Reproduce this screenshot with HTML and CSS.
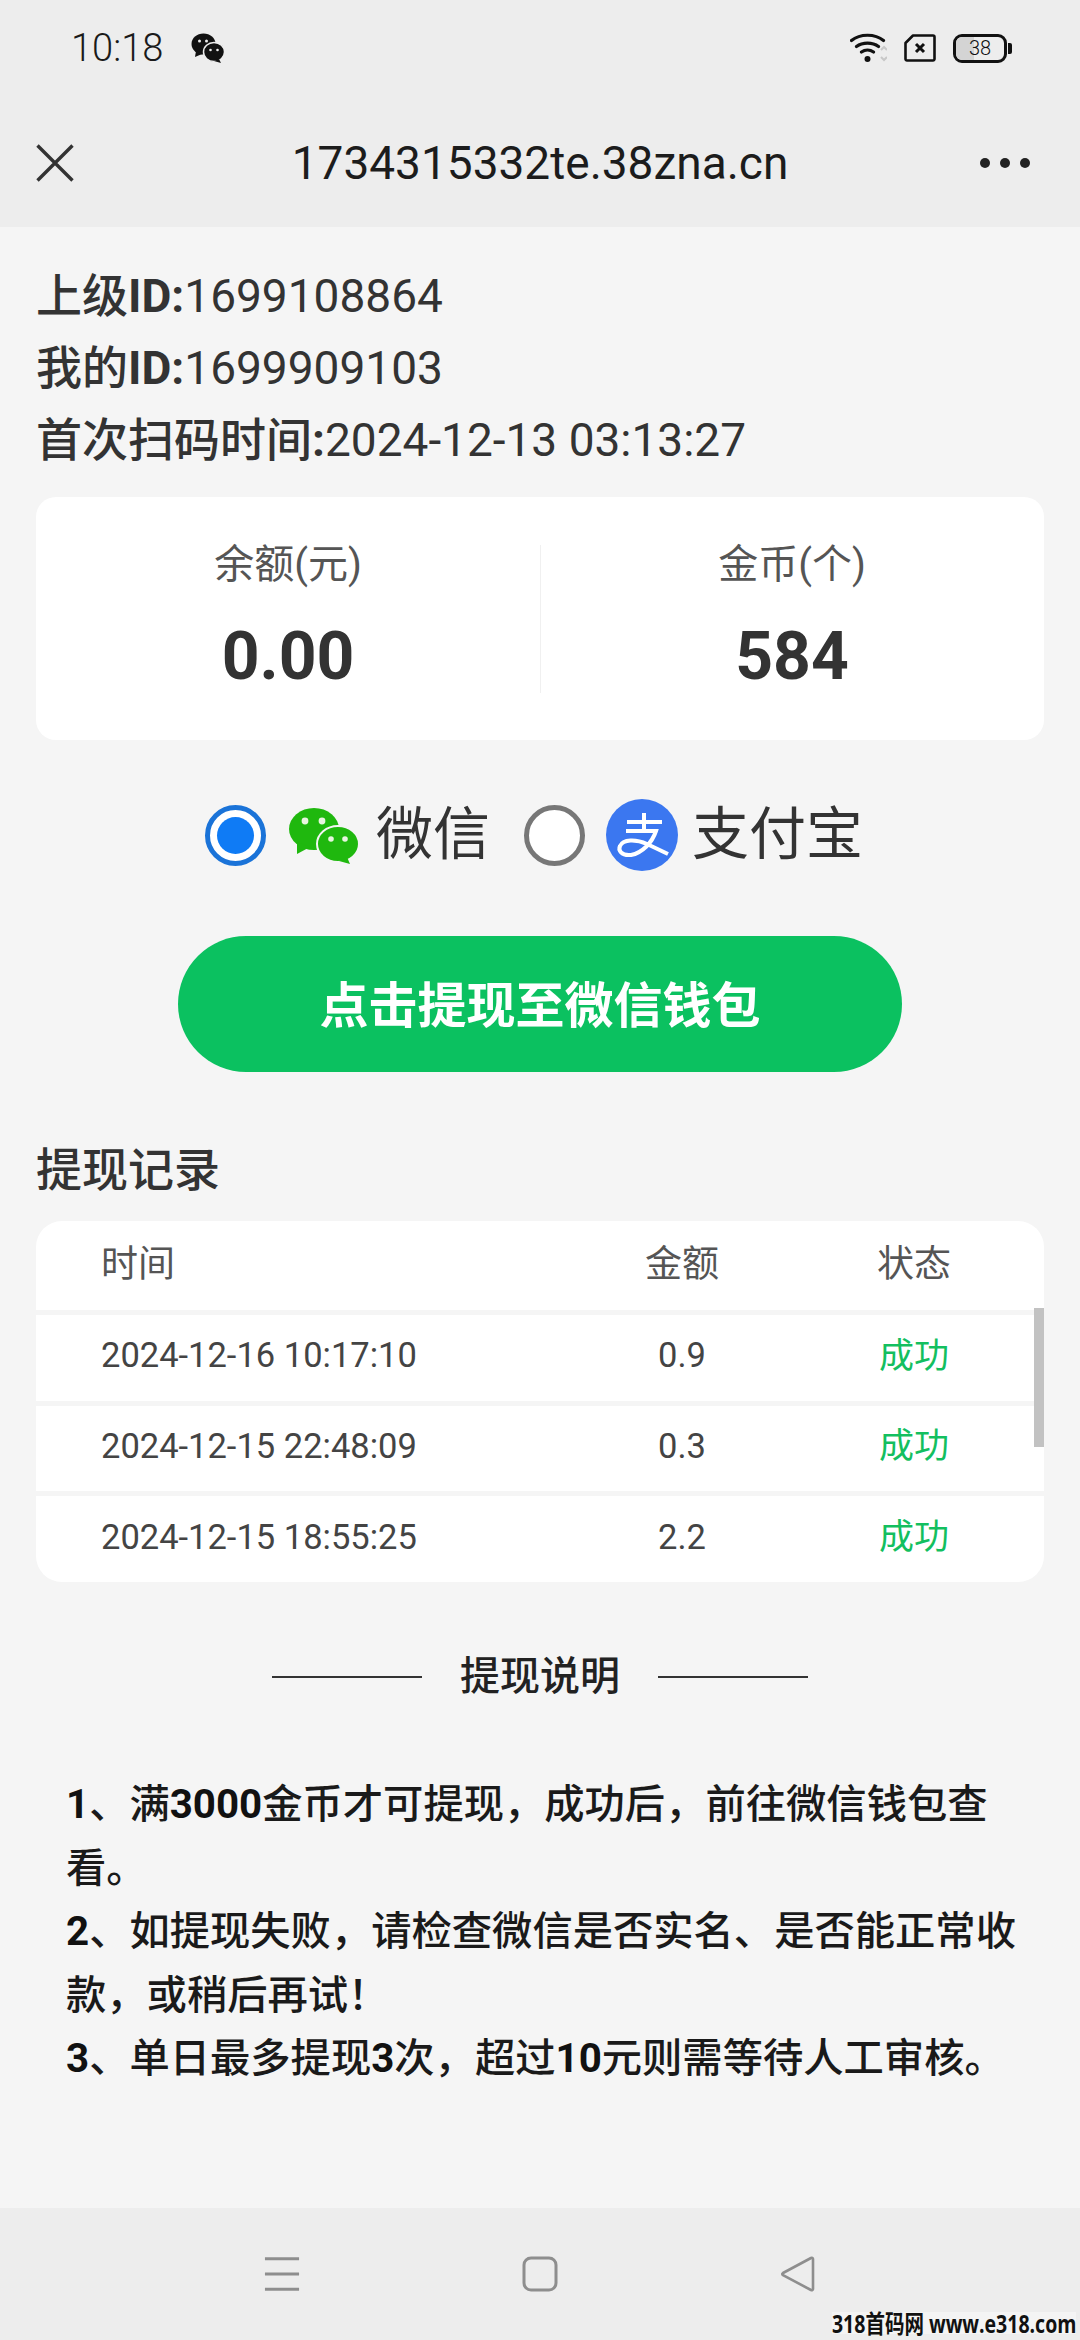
FILE: index.html
```html
<!DOCTYPE html>
<html lang="zh-CN">
<head>
<meta charset="utf-8">
<title>提现</title>
<link rel="stylesheet" href="styles.css">
</head>
<body>
<div class="phone">
  <header class="chrome">
    <div class="status">
      <div class="status-left">
        <span class="clock">10:18</span>
        <svg class="ic-wx" viewBox="0 0 34 30"><ellipse cx="12.500" cy="11" rx="12" ry="10.500" fill="#111"/><path d="M5 18l-1 6 7-3z" fill="#111"/><ellipse cx="23" cy="19" rx="10.500" ry="9.500" fill="#111" stroke="#ededed" stroke-width="1.500"/><path d="M28 26l2 4-7-2z" fill="#111"/><circle cx="8.500" cy="8" r="1.500" fill="#ededed"/><circle cx="15.500" cy="8" r="1.500" fill="#ededed"/><circle cx="19.500" cy="17" r="1.300" fill="#ededed"/><circle cx="26.500" cy="17" r="1.300" fill="#ededed"/></svg>
      </div>
      <div class="status-right">
        <svg class="ic-wifi" viewBox="0 0 37 30"><path d="M1.500 7.500C10 .5 25 .5 33.500 7.500M6.500 13.500c6-4.500 16-4.500 22 0M11.500 19c3.500-2.500 8.500-2.500 12 0" fill="none" stroke="#111" stroke-width="3.200" stroke-linecap="round"/><circle cx="17.500" cy="26" r="3" fill="#111"/><path d="M31 17l3-3 3 3M31 24l3 3 3-3" fill="none" stroke="#c8c8c8" stroke-width="2"/></svg>
        <svg class="ic-sim" viewBox="0 0 32 28"><path d="M9 1.500h20a1.500 1.500 0 0 1 1.500 1.500v22a1.500 1.500 0 0 1-1.500 1.500H3a1.500 1.500 0 0 1-1.500-1.500V9z" fill="none" stroke="#111" stroke-width="2.600" stroke-linejoin="round"/><path d="M12 10l8 8M20 10l-8 8" stroke="#111" stroke-width="3"/></svg>
        <div class="battery"><div class="battery-body"><span class="battery-fill"></span><span class="battery-num">38</span></div><span class="battery-tip"></span></div>
      </div>
    </div>
    <nav class="titlebar">
      <svg class="ic-close" viewBox="0 0 38 38"><path d="M1.500 1.500l35 35M36.500 1.500l-35 35" stroke="#333" stroke-width="3.400" fill="none"/></svg>
      <span class="site">1734315332te.38zna.cn</span>
      <div class="dots"><i></i><i></i><i></i></div>
    </nav>
  </header>

  <main class="content">
    <section class="info">
      <p><em>上级</em><b>ID:</b>1699108864</p>
      <p><em>我的</em><b>ID:</b>1699909103</p>
      <p><em>首次扫码时间</em><b>:</b>2024-12-13 03:13:27</p>
    </section>

    <section class="wallet">
      <div class="wallet-col"><span class="wallet-label">余额(元)</span><strong class="wallet-value">0.00</strong></div>
      <div class="wallet-col wallet-col-split"><span class="wallet-label">金币(个)</span><strong class="wallet-value">584</strong></div>
    </section>

    <section class="pay">
      <span class="radio radio-on"><i></i></span>
      <svg class="ic-wechat" viewBox="0 0 70 57"><ellipse cx="25" cy="22" rx="25" ry="21" fill="#1fb80e"/><path d="M8 35l0 12 13-7z" fill="#1fb80e"/><ellipse cx="49" cy="37" rx="21" ry="18" fill="#1fb80e" stroke="#f5f5f5" stroke-width="2"/><path d="M58 50l3 7-11-3z" fill="#1fb80e"/><circle cx="16" cy="14" r="3.400" fill="#e8f5e0"/><circle cx="33" cy="14" r="3.400" fill="#e8f5e0"/><circle cx="42" cy="32" r="2.800" fill="#e8f5e0"/><circle cx="56" cy="32" r="2.800" fill="#e8f5e0"/></svg>
      <span class="pay-name">微信</span>
      <span class="radio"></span>
      <svg class="ic-alipay" viewBox="0 0 72 72"><circle cx="36" cy="36" r="36" fill="#3b77f0"/><path d="M21 23h35M38 14v17M20 32h30c-4 12-14 22-25 24-10 1-13-5-11-9 3-7 16-7 27-2l21 10" fill="none" stroke="#fff" stroke-width="4"/></svg>
      <span class="pay-name">支付宝</span>
    </section>

    <button class="cta">点击提现至微信钱包</button>

    <h2 class="records-title">提现记录</h2>
    <section class="table">
      <div class="row row-head"><span>时间</span><span class="c">金额</span><span class="c">状态</span></div>
      <div class="row"><span>2024-12-16 10:17:10</span><span class="c">0.9</span><span class="c ok">成功</span></div>
      <div class="row"><span>2024-12-15 22:48:09</span><span class="c">0.3</span><span class="c ok">成功</span></div>
      <div class="row"><span>2024-12-15 18:55:25</span><span class="c">2.2</span><span class="c ok">成功</span></div>
      <span class="scrollbar"></span>
    </section>

    <h2 class="notes-title"><span>提现说明</span></h2>
    <ol class="notes">
      <li><b>1</b>、满<b>3000</b>金币才可提现，成功后，前往微信钱包查看。</li>
      <li><b>2</b>、如提现失败，请检查微信是否实名、是否能正常收款，或稍后再试！</li>
      <li><b>3</b>、单日最多提现<b>3</b>次，超过<b>10</b>元则需等待人工审核。</li>
    </ol>
  </main>

  <footer class="softkeys">
    <svg class="key" viewBox="0 0 38 36"><path d="M1 2h36M1 18h36M1 34h36" stroke="#8e8e8e" stroke-width="3.200"/></svg>
    <svg class="key" viewBox="0 0 36 36"><rect x="2" y="2" width="32" height="32" rx="7" fill="none" stroke="#8e8e8e" stroke-width="3"/></svg>
    <svg class="key" viewBox="0 0 36 36"><path d="M33 3c0-1-1-1.500-2-1L3 17c-1 .7-1 1.500 0 2.200L31 34c1 .5 2 0 2-1z" fill="none" stroke="#8e8e8e" stroke-width="2.600" stroke-linejoin="round"/></svg>
    <span class="watermark">318首码网 www.e318.com</span>
  </footer>
</div>
</body>
</html>
```
FILE: styles.css
```css
* { box-sizing: border-box; }
html, body { margin: 0; padding: 0; }
body { font-family: Roboto, "Noto Sans CJK SC", sans-serif; color: #333; background: #f5f5f5; }
.phone { width: 1080px; height: 2340px; display: flex; flex-direction: column; overflow: hidden; }

.chrome { background: #ededed; height: 227px; flex: none; }
.status { height: 90px; padding: 33px 68px 0 71px; display: flex; justify-content: space-between; align-items: flex-start; }
.status-left { display: flex; align-items: center; gap: 28px; height: 30px; }
.clock { font-size: 38px; font-weight: 300; color: #1a1a1a; line-height: 30px; }
.ic-wx { width: 34px; height: 30px; }
.status-right { display: flex; align-items: center; gap: 17px; height: 30px; }
.ic-wifi { width: 37px; height: 30px; }
.ic-sim { width: 32px; height: 28px; }
.battery { display: flex; align-items: center; gap: 1px; }
.battery-body { width: 54px; height: 29px; border: 3px solid #111; border-radius: 9px; position: relative; display: flex; align-items: center; justify-content: center; overflow: hidden; }
.battery-fill { position: absolute; left: 0; top: 0; bottom: 0; width: 38%; background: #d4d4d4; }
.battery-num { position: relative; font-size: 20px; font-weight: 300; color: #111; line-height: 1; }
.battery-tip { width: 4px; height: 11px; background: #111; border-radius: 0 2px 2px 0; }

.titlebar { height: 137px; padding: 8px 36px 0; display: grid; grid-template-columns: 1fr auto 1fr; align-items: center; }
.ic-close { width: 38px; height: 38px; }
.site { font-size: 46px; color: #1c1c1c; line-height: 1; }
.dots { display: flex; gap: 10px; justify-self: end; margin-right: 14px; }
.dots i { width: 10px; height: 10px; border-radius: 50%; background: #222; display: block; }

.content { flex: 1; padding: 33px 36px 0; min-height: 0; }
.info p { margin: 0; font-size: 46px; line-height: 72px; color: #333; }
.info em { font-style: normal; font-weight: 500; }
.info b { font-weight: 700; }

.wallet { margin-top: 21px; height: 243px; background: #fff; border-radius: 20px; display: grid; grid-template-columns: 1fr 1fr; align-items: center; }
.wallet-col { display: flex; flex-direction: column; align-items: center; }
.wallet-col-split { position: relative; }
.wallet-col-split::before { content: ""; position: absolute; left: 0; top: 5px; bottom: 5px; width: 1px; background: #f0f0f0; }
.wallet-label { font-size: 40px; line-height: 50px; color: #555; }
.wallet-value { font-size: 66px; font-weight: 700; line-height: 82px; margin-top: 26px; color: #333; }

.pay { margin-top: 59px; height: 72px; display: flex; align-items: center; padding-left: 169px; }
.radio { width: 61px; height: 61px; border-radius: 50%; border: 5px solid #777; background: #fff; display: flex; align-items: center; justify-content: center; flex: none; margin-right: 23px; }
.radio-on { border-color: #1a73d8; background: #fff; }
.radio-on i { width: 37px; height: 37px; border-radius: 50%; background: #0f7bf5; display: block; }
.ic-wechat { width: 70px; height: 57px; flex: none; margin-right: 17px; }
.ic-alipay { width: 72px; height: 72px; flex: none; margin-left: -2px; margin-right: 14px; }
.pay-name { font-size: 57px; line-height: 72px; color: #333; margin-right: 34px; }

.cta { display: block; margin: 65px auto 0; width: 724px; height: 136px; border: 0; border-radius: 68px; background: #0bc160; color: #fff; font-family: inherit; font-size: 49px; font-weight: 700; padding: 0 0 5px; }

.records-title { margin: 68px 0 0; font-size: 46px; font-weight: 500; line-height: 60px; color: #333; }
.table { margin-top: 21px; height: 361px; border-radius: 26px; overflow: hidden; position: relative; display: flex; flex-direction: column; gap: 5px; }
.row { flex: 1; background: #fff; display: grid; grid-template-columns: 1fr 232px 232px; align-items: center; padding: 0 14px 5px 65px; font-size: 34.500px; color: #444; }
.row-head { font-size: 37px; color: #555; padding-bottom: 8px; }
.c { text-align: center; }
.ok { color: #13bf5f; font-size: 35px; padding-bottom: 6px; }
.scrollbar { position: absolute; right: 0; top: 87px; width: 10px; height: 139px; background: #c2c2c2; }

.notes-title { margin: 67px 0 0; display: flex; align-items: center; justify-content: center; gap: 38px; font-size: 40px; font-weight: 500; line-height: 56px; color: #222; }
.notes-title::before, .notes-title::after { content: ""; width: 150px; height: 2px; background: #333; }
.notes { list-style: none; margin: 68px 0 0; padding: 0 22px 0 30px; font-size: 40.300px; font-weight: 500; line-height: 63.500px; color: #1a1a1a; }
.notes b { font-weight: 700; color: #111; }

.softkeys { flex: none; height: 132px; background: #ededed; position: relative; display: flex; align-items: flex-start; padding: 48px 0 0 264px; gap: 222px; }
.key { width: 36px; height: 36px; flex: none; }
.watermark { position: absolute; right: 4px; bottom: 6px; font-size: 25px; line-height: 22px; font-weight: 700; color: #111; background: #f4f4f4; white-space: nowrap; font-family: "Open Sans", "Noto Sans CJK SC", sans-serif; transform: scaleX(.78); transform-origin: right center; }
```
